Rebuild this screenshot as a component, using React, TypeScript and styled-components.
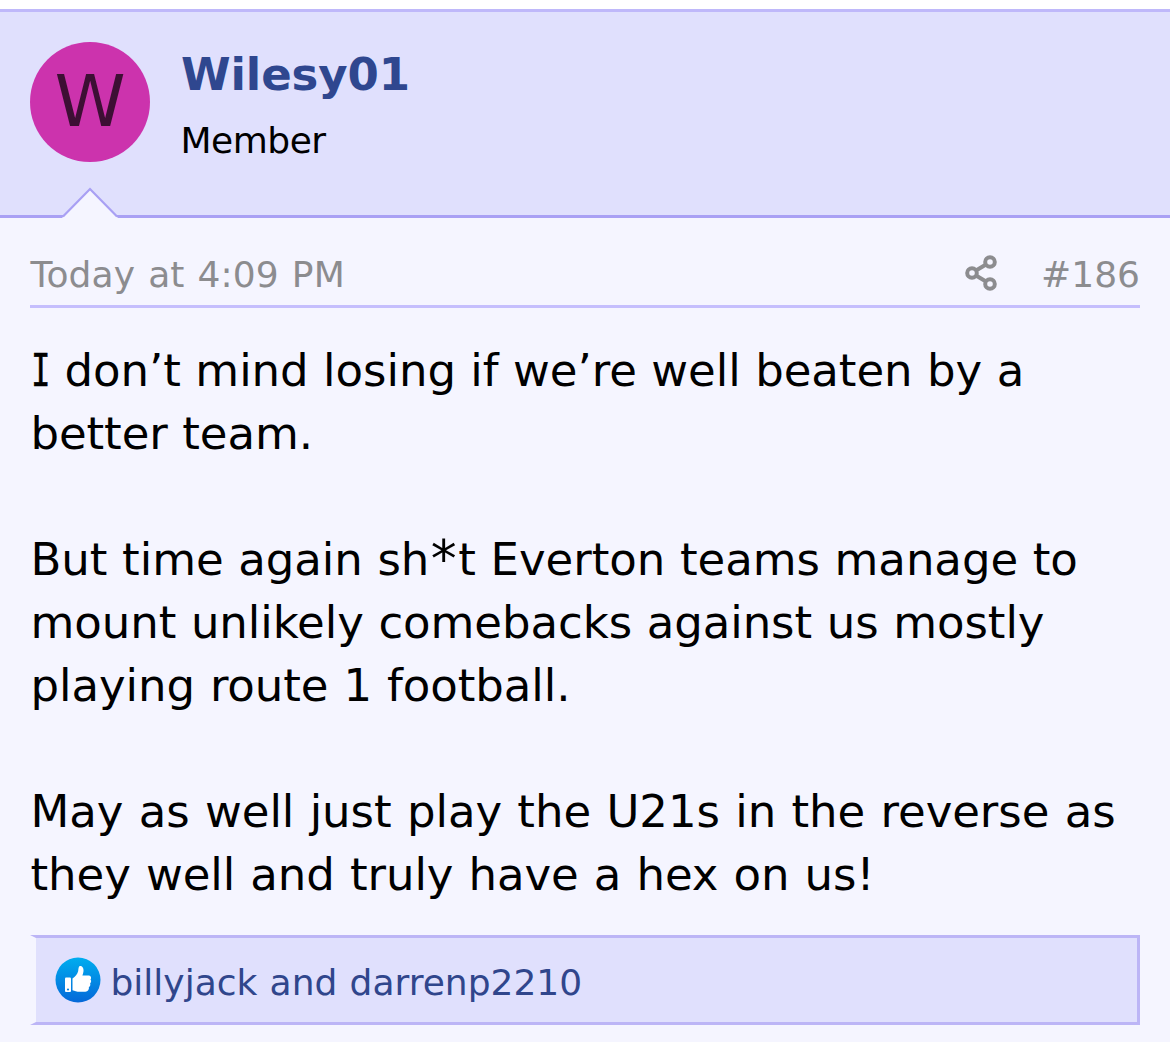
import React from 'react'
import styled, { createGlobalStyle } from 'styled-components'

const GlobalStyle = createGlobalStyle`
    body {
        margin: 0;
        background: #ffffff;
        font-family: Verdana, 'DejaVu Sans', sans-serif;
        color: #000000;
    }
`

const Post = styled.article`
    box-sizing: border-box;
    width: 100%;
    height: 1033px;
    margin-top: 9px;
    border-top: 3px solid #bfb8fa;
    background: #f5f5ff;
    overflow: hidden;
`

const UserHeader = styled.header`
    position: relative;
    box-sizing: border-box;
    display: flex;
    gap: 31px;
    height: 206px;
    padding: 30px;
    border-bottom: 3px solid #a9a0f4;
    background: #e0e0fd;
`

const Avatar = styled.div`
    width: 120px;
    height: 120px;
    border-radius: 50%;
    background: #cc33ad;
    color: #3d0f34;
    font-size: 72px;
    line-height: 119px;
    text-align: center;
`

const UserText = styled.div`
    display: flex;
    flex-direction: column;
    padding-top: 1px;
`

const UserName = styled.h4`
    margin: 0;
    color: #2f478f;
    font-size: 45px;
    font-weight: 700;
    line-height: 63px;
    letter-spacing: -0.1px;
`

const UserTitle = styled.div`
    margin: 10px 0 0 -0.5px;
    font-size: 36px;
    line-height: 50px;
    letter-spacing: -0.5px;
`

const Arrow = styled.svg`
    position: absolute;
    left: 60px;
    bottom: -3px;
    width: 60px;
    height: 31px;
`

const Content = styled.div`
    padding: 30px 30px 0;
`

const MetaRow = styled.div`
    box-sizing: border-box;
    display: flex;
    align-items: center;
    height: 60px;
    padding-bottom: 3px;
    border-bottom: 3px solid #c5befd;
    color: #8c8c8f;
    font-size: 36px;
    line-height: 50px;
`

const ShareIcon = styled.svg`
    width: 36px;
    height: 40px;
    margin: 0 43px 4px auto;
`

const Message = styled.div`
    display: flex;
    flex-direction: column;
    gap: 63px;
    margin-top: 31px;
    font-size: 45px;
    line-height: 63px;
`

const Paragraph = styled.p`
    margin: 0;
`

const Line = styled.span<{ $letter?: number; $word?: number }>`
    display: block;
    padding-left: 0.5px;
    white-space: nowrap;
    letter-spacing: ${({ $letter = 0 }) => $letter}px;
    word-spacing: ${({ $word = 0 }) => $word}px;
`

// capital I with slab serifs, narrowed to the width of the proportional face
const SerifI = styled.span`
    display: inline-block;
    margin-right: -7.5px;
    font-family: 'DejaVu Sans Mono', monospace;
    transform: scaleX(0.72);
    transform-origin: left;
    -webkit-text-stroke: 0.5px #000000;
`

const Asterisk = styled.span`
    display: inline-block;
    padding: 0 3px 0 3.5px;
    transform: scale(1.15);
`

const Reactions = styled.div`
    box-sizing: border-box;
    display: flex;
    align-items: center;
    height: 90px;
    margin-top: 29px;
    padding-left: 19px;
    border: 3px solid #bcb5f6;
    border-left: 6px solid #f5f5ff;
    background: #e0e0fd;
    color: #30468c;
    font-size: 36px;
`

const LikeIcon = styled.svg`
    width: 46px;
    height: 46px;
    margin-right: 9px;
`

const ReactionNames = styled(Line)`
    padding-top: 5px;
`

const paragraphs = [
    [
        { text: <><SerifI>I</SerifI> don’t mind losing if we’re well beaten by a</>, letter: -0.04, word: 0.2 },
        { text: 'better team.', letter: -0.1, word: 0.5 },
    ],
    [
        { text: <>But time again sh<Asterisk>*</Asterisk>t Everton teams manage to</>, letter: -0.04, word: 0.4 },
        { text: 'mount unlikely comebacks against us mostly', letter: -0.06, word: 0.4 },
        { text: 'playing route 1 football.', letter: -0.06, word: 0.7 },
    ],
    [
        { text: 'May as well just play the U21s in the reverse as', letter: -0.05, word: 1.1 },
        { text: 'they well and truly have a hex on us!', letter: -0.06, word: 0.9 },
    ],
]

export default function App() {
    return (
        <>
            <GlobalStyle />
            <Post>
                <UserHeader>
                    <Avatar>W</Avatar>
                    <UserText>
                        <UserName>Wilesy01</UserName>
                        <UserTitle>Member</UserTitle>
                    </UserText>
                    <Arrow viewBox="0 0 60 31">
                        <path d="M2 31L30 2.5L58 31Z" fill="#f5f5ff" />
                        <path d="M3 29.5L30 2L57 29.5" fill="none" stroke="#a9a0f4" strokeWidth="2.2" />
                    </Arrow>
                </UserHeader>
                <Content>
                    <MetaRow>
                        <Line as="time" $letter={0.1} $word={1.5}>Today at 4:09 PM</Line>
                        <ShareIcon viewBox="0 0 36 40" fill="none" stroke="#8c8c8f" strokeWidth="4">
                            <circle cx="10" cy="20" r="4.8" />
                            <circle cx="28" cy="9" r="4.8" />
                            <circle cx="28" cy="31" r="4.8" />
                            <path d="M14 17.5L24 11.5M14 22.5L24 28.5" />
                        </ShareIcon>
                        <Line>#186</Line>
                    </MetaRow>
                    <Message>
                        {paragraphs.map((lines, p) => (
                            <Paragraph key={p}>
                                {lines.map((line, i) => (
                                    <Line key={i} $letter={line.letter} $word={line.word}>{line.text}</Line>
                                ))}
                            </Paragraph>
                        ))}
                    </Message>
                    <Reactions>
                        <LikeIcon viewBox="0 0 46 46">
                            <defs>
                                <linearGradient id="like" x1="0" y1="0" x2="0" y2="1">
                                    <stop offset="0" stopColor="#00adef" />
                                    <stop offset="1" stopColor="#0568d8" />
                                </linearGradient>
                            </defs>
                            <circle cx="23" cy="23" r="22.5" fill="url(#like)" />
                            <path
                                d="M11 20.5h4q1 0 1 1v12.500q0 1-1 1h-4q-1 0-1-1v-12.500q0-1 1-1z"
                                fill="#fff"
                            />
                            <circle cx="13" cy="32.5" r="1.1" fill="#0783df" />
                            <path
                                d="M17.500 21.500c2.700-2 5-4.500 5.700-7.600 .3-1.800 .2-4.800 1.800-5 2.600-.2 3.800 2.600 3.500 5.300-.1 1.600-.7 3-1.100 4.300h6.100c2.300 0 3.300 2.300 2 4.100 1 1.200 .8 2.900-.4 3.900 .6 1.500 .1 2.900-1.200 3.600 .4 2.700-1 4.600-3.500 4.600h-5.900c-2.700 0-4.800-.6-7-1.500z"
                                fill="#fff"
                            />
                        </LikeIcon>
                        <ReactionNames $word={0.8}>billyjack and darrenp2210</ReactionNames>
                    </Reactions>
                </Content>
            </Post>
        </>
    )
}
